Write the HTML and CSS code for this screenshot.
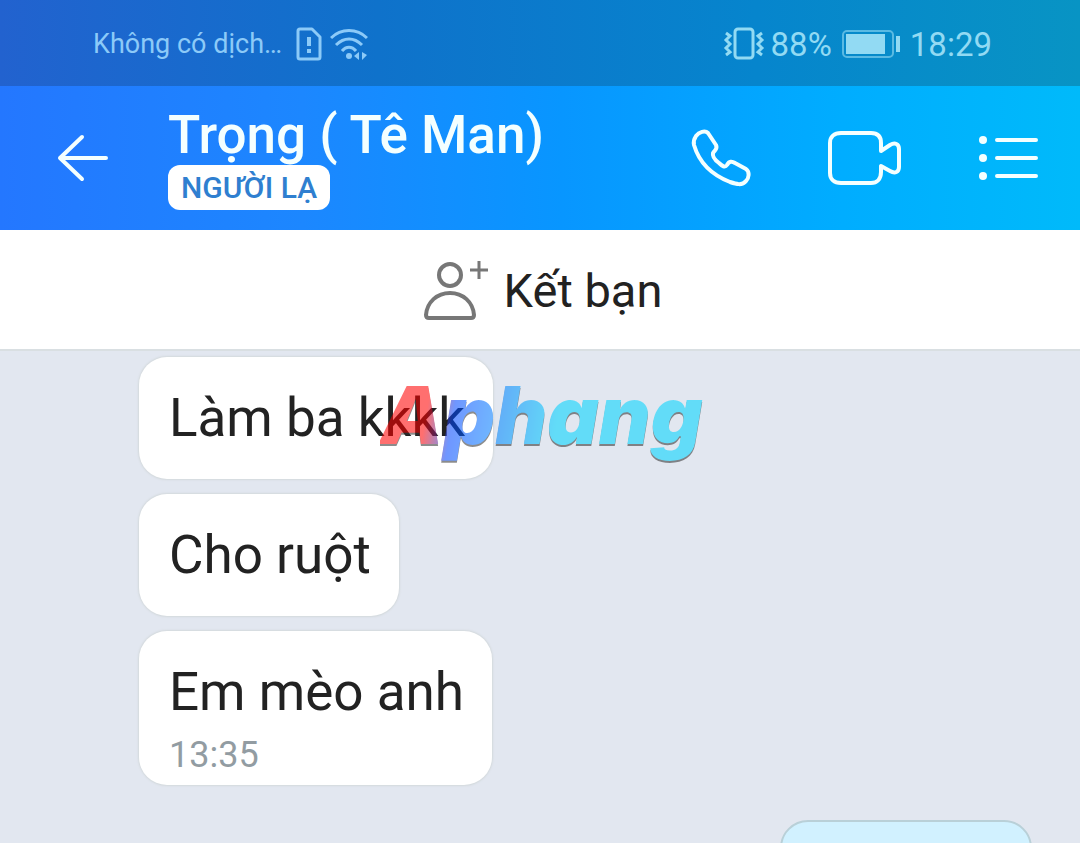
FILE: index.html
```html
<!DOCTYPE html>
<html lang="vi">
<head>
  <meta charset="UTF-8">
  <meta name="viewport" content="width=device-width, initial-scale=1.0">
  <title>Trọng ( Tê Man)</title>
  <link rel="stylesheet" href="styles.css">
</head>
<body>
  <div class="status-bar">
    <div class="status-left">
      <span class="carrier">Không có dịch…</span>
      <svg class="icon-sim" width="26" height="34" viewBox="0 0 26 34" fill="none" stroke="currentColor" stroke-width="3" stroke-linejoin="round">
        <path d="M4 2h12l8 8v20a2 2 0 0 1-2 2H4a2 2 0 0 1-2-2V4a2 2 0 0 1 2-2z"/>
        <path d="M13 10v9M13 22v4" stroke-width="4"/>
      </svg>
      <svg class="icon-wifi" width="38" height="34" viewBox="0 0 38 34" fill="none" stroke="currentColor" stroke-width="3">
        <path d="M1 11c10-10 26-10 36 0M6 18c8-8 18-8 26 0M12 24c4-5 10-5 14 0"/>
        <circle cx="19" cy="29" r="3" fill="currentColor" stroke="none"/>
        <path d="M24 29l5-4v8zM32 25l5 3-5 5z" fill="currentColor" stroke="none"/>
      </svg>
    </div>
    <div class="status-right">
      <svg width="42" height="34" viewBox="0 0 42 34" fill="none" stroke="currentColor" stroke-width="3">
        <rect x="12" y="2" width="18" height="29" rx="3"/>
        <path d="M3 6l4 3-4 4 4 4-4 4 4 4-4 3M39 6l-4 3 4 4-4 4 4 4-4 4 4 3"/>
      </svg>
      <span class="battery-text">88%</span>
      <svg class="icon-battery" width="58" height="28" viewBox="0 0 58 28">
        <rect x="1" y="1" width="50" height="26" rx="4" fill="none" stroke="currentColor" stroke-width="2" opacity="0.6"/>
        <rect x="4" y="4" width="39" height="20" fill="currentColor"/>
        <path d="M56 6v16" stroke="currentColor" stroke-width="4"/>
      </svg>
      <span class="clock">18:29</span>
    </div>
  </div>

  <header class="header">
    <button class="icon-btn back" aria-label="Quay lại">
      <svg width="54" height="50" viewBox="0 0 54 50" fill="none" stroke="currentColor" stroke-width="4" stroke-linecap="round" stroke-linejoin="round">
        <path d="M26 4L4 25l22 21M4 25h46"/>
      </svg>
    </button>
    <div class="contact">
      <h1>Trọng ( Tê Man)</h1>
      <span class="tag">NGƯỜI LẠ</span>
    </div>
    <div class="actions">
      <button class="icon-btn" aria-label="Gọi thoại">
        <svg width="62" height="60" viewBox="0 0 62 60" fill="none" stroke="currentColor" stroke-width="4" stroke-linejoin="round">
          <path d="M6 8C9 4 15 2 18 5l8 12c2 4-1 5-3 8-1 4 2 7 6 10 3 3 6 5 8 2 2-4 5-4 8-2l11 6c4 3 3 9 0 12-4 5-10 3-16 1C22 47 9 34 4 17 3 13 4 11 6 8z"/>
        </svg>
      </button>
      <button class="icon-btn" aria-label="Gọi video">
        <svg width="74" height="54" viewBox="0 0 74 54" fill="none" stroke="currentColor" stroke-width="4" stroke-linejoin="round">
          <path d="M13 2h30c7 0 10 4 10 10v8l9-6c5-3 9-1 9 4v18c0 5-4 7-9 4l-9-5v6c0 7-4 11-10 11H13C6 52 2 48 2 42V12C2 6 6 2 13 2z"/>
        </svg>
      </button>
      <button class="icon-btn" aria-label="Tùy chọn">
        <svg width="62" height="46" viewBox="0 0 62 46" fill="none" stroke="currentColor" stroke-width="4" stroke-linecap="round">
          <path d="M19 5h39M19 23h39M19 41h39"/>
          <g fill="currentColor" stroke="none">
            <circle cx="5" cy="5" r="4"/>
            <circle cx="5" cy="23" r="4"/>
            <circle cx="5" cy="41" r="4"/>
          </g>
        </svg>
      </button>
    </div>
  </header>

  <button class="add-friend">
    <svg width="66" height="60" viewBox="0 0 66 60" fill="none" stroke="currentColor" stroke-width="4" stroke-linejoin="round">
      <circle cx="28" cy="14" r="11"/>
      <path d="M4 54C5 41 15 32 28 32s23 9 24 22c0 2-1 3-3 3H7c-2 0-3-1-3-3z"/>
      <path d="M48 9h18M57 0v18" stroke-width="3"/>
    </svg>
    <span>Kết bạn</span>
  </button>

  <main class="chat">
    <div class="bubble">
      <p>Làm ba kkkk</p>
    </div>
    <div class="bubble">
      <p>Cho ruột</p>
    </div>
    <div class="bubble">
      <p>Em mèo anh</p>
      <time>13:35</time>
    </div>
    <div class="bubble sent"></div>
    <div class="watermark">Aphang</div>
  </main>
</body>
</html>
```

FILE: styles.css
```css
* {
  box-sizing: border-box;
}

body {
  font-family: Roboto, "Noto Sans", sans-serif;
  margin: 0;
  height: 100vh;
  display: flex;
  flex-direction: column;
  overflow: hidden;
  background: #e2e7f0;
  color: #222;
}

button {
  font-family: inherit;
  border: 0;
  padding: 0;
  cursor: pointer;
}

svg {
  display: block;
  flex: none;
}

/* Status bar */
.status-bar {
  flex: none;
  height: 86px;
  padding: 2px 88px 0 93px;
  display: flex;
  justify-content: space-between;
  align-items: center;
  background: linear-gradient(90deg, #2262cf, #0f72cb 35%, #0685cd 70%, #0894c4);
  color: #8ccaf8;
}

.status-left,
.status-right {
  display: flex;
  align-items: center;
}

.status-right {
  color: #92daf3;
}

.carrier {
  font-size: 27px;
}

.icon-sim {
  margin-left: 14px;
}

.icon-wifi {
  margin-left: 8px;
}

.battery-text,
.clock {
  font-size: 33px;
}

.battery-text {
  margin-left: 6px;
}

.icon-battery {
  margin: 0 10px;
}

/* Header */
.header {
  flex: none;
  height: 144px;
  padding: 0 40px 0 56px;
  display: flex;
  align-items: center;
  background: linear-gradient(90deg, #2477ff, #1c87ff 28%, #0896ff 52%, #00adff 78%, #00bafa);
  color: #f4ffff;
}

.icon-btn {
  background: none;
  color: inherit;
}

.contact {
  flex: 1;
  margin-left: 58px;
  display: flex;
  flex-direction: column;
  align-items: flex-start;
}

.contact h1 {
  margin: 0;
  padding-bottom: 2px;
  font-size: 53px;
  line-height: 56px;
  font-weight: 500;
  white-space: nowrap;
}

.tag {
  padding: 0 13px;
  border-radius: 12px;
  background: #fff;
  color: #2f7fd0;
  font-size: 30px;
  line-height: 45px;
  font-weight: 500;
}

.actions {
  display: flex;
  align-items: center;
  gap: 76px;
}

/* Add friend */
.add-friend {
  flex: none;
  height: 121px;
  padding: 2px 0 0 4px;
  border-bottom: 2px solid #d9dfe2;
  background: #fff;
  color: #777;
  display: flex;
  justify-content: center;
  align-items: center;
  gap: 16px;
}

.add-friend span {
  color: #222;
  font-size: 47px;
}

/* Chat */
.chat {
  flex: 1;
  min-height: 0;
  position: relative;
  overflow: hidden;
  padding: 6px 48px 0 139px;
  display: flex;
  flex-direction: column;
  align-items: flex-start;
  gap: 15px;
}

.bubble {
  flex: none;
  padding: 30px 28px 30px 30px;
  border-radius: 28px;
  background: #fff;
  box-shadow: 0 0 2px 1px #d3d9dc;
}

.bubble p {
  margin: 0;
  font-size: 53px;
  line-height: 62px;
}

.bubble time {
  display: block;
  font-size: 36px;
  line-height: 44px;
  margin: 10px 0 -22px;
  color: #929ca2;
}

.sent {
  align-self: flex-end;
  width: 252px;
  height: 124px;
  margin-top: 20px;
  border: 2px solid #b9d0d8;
  background: #d1f1ff;
  box-shadow: none;
}

.watermark {
  position: absolute;
  left: 380px;
  top: 17px;
  font-family: Inter, sans-serif;
  font-size: 80px;
  line-height: 94px;
  font-weight: 900;
  font-style: italic;
  background: linear-gradient(100deg, #f00 16%, #0046ff 24%, #00d4ff 55%);
  -webkit-background-clip: text;
  background-clip: text;
  color: transparent;
  filter: drop-shadow(0 2px 0 #333);
  opacity: 0.56;
}
```
